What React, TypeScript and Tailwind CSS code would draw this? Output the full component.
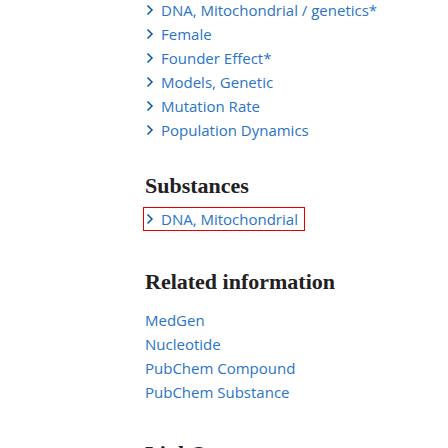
const meshTerms = [
  "DNA, Mitochondrial / genetics*",
  "Female",
  "Founder Effect*",
  "Models, Genetic",
  "Mutation Rate",
  "Population Dynamics",
];

const related = ["MedGen", "Nucleotide", "PubChem Compound", "PubChem Substance"];

const Chevron = () => (
  <svg width="10" height="12" viewBox="0 0 10 12" className="shrink-0">
    <path d="M2.5 1.5 L7 6 L2.5 10.5" fill="none" stroke="#0b5aa6" strokeWidth="1.5" />
  </svg>
);

const App = () => {
  return (
    <div className="w-[448px] h-[448px] overflow-hidden bg-white font-['Open_Sans',sans-serif] text-[15px]">
      <div className="pl-[145px] -mt-[2px]">
        <ul className="flex flex-col">
          {meshTerms.map((t) => (
            <li key={t} className="flex items-center gap-[6px] h-[24px] text-[#2a74c6]">
              <Chevron />
              <span>{t}</span>
            </li>
          ))}
        </ul>
        <h2 className="mt-[32px] font-['Liberation_Serif',serif] font-bold text-[22px] text-[#212121] leading-[24px] whitespace-nowrap">
          Substances
        </h2>
        <div className="mt-[9px] w-[162px] h-[24px] -ml-[2px] border border-[#e00000] flex items-center gap-[6px] pl-[1px] text-[#2a74c6]">
          <Chevron />
          <span>DNA, Mitochondrial</span>
        </div>
        <h2 className="mt-[39px] font-['Liberation_Serif',serif] font-bold text-[22px] text-[#212121] leading-[24px] whitespace-nowrap">
          Related information
        </h2>
        <ul className="mt-[14px] flex flex-col">
          {related.map((r) => (
            <li key={r} className="h-[24px] flex items-center text-[#2a74c6]">
              {r}
            </li>
          ))}
        </ul>
        <h2 className="mt-[38px] font-['Liberation_Serif',serif] font-bold text-[22px] text-[#212121] leading-[24px] whitespace-nowrap">
          LinkOut - more resources
        </h2>
      </div>
    </div>
  );
};

export default App;
